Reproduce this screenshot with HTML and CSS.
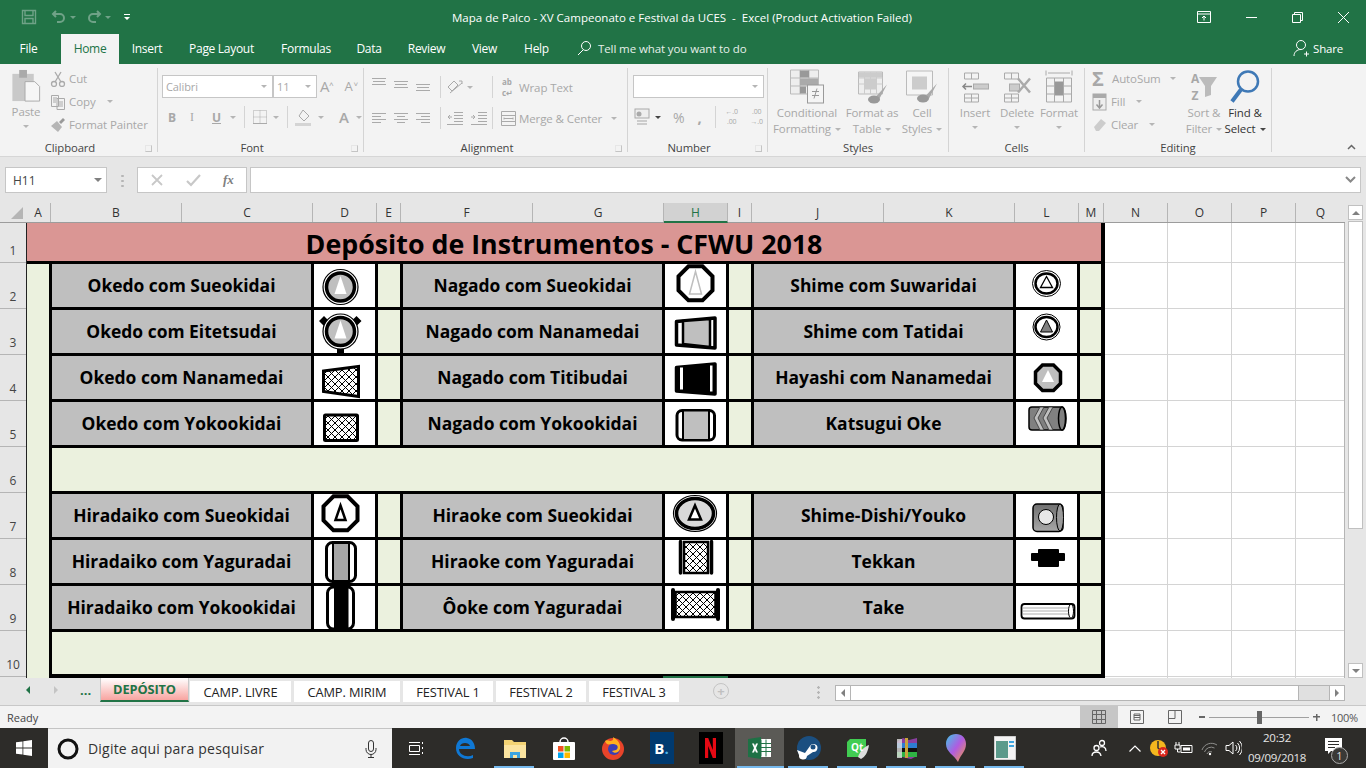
FILE: index.html
```html
<!DOCTYPE html>
<html lang="pt">
<head>
<meta charset="utf-8">
<title>Mapa de Palco</title>
<link rel="stylesheet" href="styles.css">
</head>
<body>
<svg class="defs" width="0" height="0"><defs>
<pattern id="hatch" width="7" height="7" patternUnits="userSpaceOnUse"><rect width="7" height="7" fill="#fff"/><path d="M0 0L7 7M7 0L0 7" stroke="#000" stroke-width="1" fill="none"/></pattern>
<linearGradient id="metal" x1="0" y1="0" x2="0" y2="1"><stop offset="0" stop-color="#6f6f6f"/><stop offset="1" stop-color="#a8a8a8"/></linearGradient>
</defs></svg>
<div class="app">
<header class="titlebar">
  <div class="qat">
    <svg class="qs" width="16" height="16" viewBox="0 0 16 16" fill="none" stroke="#6fa287" stroke-width="1.4"><path d="M1.5 1.5h13v13h-13zM4 1.5v5h8v-5M4 14.5v-5h8v5"/></svg>
    <svg width="16" height="16" viewBox="0 0 16 16" fill="none" stroke="#6fa287" stroke-width="2"><path d="M5 2L2 5l3 3M2 5h7a4 4 0 0 1 0 8H6"/></svg><i class="caret qc"></i>
    <svg width="16" height="16" viewBox="0 0 16 16" fill="none" stroke="#6fa287" stroke-width="2"><path d="M11 2l3 3-3 3M14 5H7a4 4 0 0 0 0 8h3"/></svg><i class="caret qc"></i>
    <svg class="qmore" width="8" height="8" viewBox="0 0 8 8" fill="#fff"><path d="M1 1h6v1H1zM1 4h6L4 7z"/></svg>
  </div>
  <div class="doc-title">Mapa de Palco - XV Campeonato e Festival da UCES &nbsp;- &nbsp;Excel (Product Activation Failed)</div>
  <div class="winbtns">
    <svg width="14" height="12" viewBox="0 0 14 12" fill="none" stroke="#fff"><path d="M.5.5h13v11H.5zM.5 3h13M7 9.5V5M5 7l2-2 2 2"/></svg>
    <svg width="11" height="11" viewBox="0 0 11 11" stroke="#fff"><path d="M0 5.5h11"/></svg>
    <svg width="11" height="11" viewBox="0 0 11 11" fill="none" stroke="#fff"><path d="M.5 2.5h8v8h-8zM2.5 2.5v-2h8v8h-2"/></svg>
    <svg width="11" height="11" viewBox="0 0 11 11" fill="none" stroke="#fff"><path d="M0 0l11 11M11 0L0 11"/></svg>
  </div>
</header>
<nav class="tabbar">
  <span class="tab t-file">File</span><span class="tab active t-home">Home</span><span class="tab t-ins">Insert</span><span class="tab t-pl">Page Layout</span><span class="tab t-for">Formulas</span><span class="tab t-dat">Data</span><span class="tab t-rev">Review</span><span class="tab t-vie">View</span><span class="tab t-hel">Help</span>
  <span class="tell"><svg width="16" height="16" viewBox="0 0 16 16" fill="none" stroke="#fff"><circle cx="10" cy="6" r="4.5"/><path d="M7 10l-5 5"/></svg>Tell me what you want to do</span>
  <span class="share"><svg width="16" height="18" viewBox="0 0 16 18" fill="none" stroke="#fff"><circle cx="8" cy="6" r="4.5"/><path d="M1 17c0-4 3-6.500 7-6.500M11 15h5M13.500 12.500v5"/></svg>Share</span>
</nav>
<section class="ribbon">
  <div class="group g-clip">
    <div class="gbody">
      <div class="big paste">
        <svg width="30" height="36" viewBox="0 0 30 36"><rect x="1" y="5" width="22" height="28" fill="#c9c9c9"/><rect x="8" y="1" width="8" height="8" fill="#aaa"/><path d="M14 13h10l5 5v15H14z" fill="#f6f6f6" stroke="#aaa"/></svg>
        <span>Paste</span><i class="caret"></i>
      </div>
      <div class="smalls">
        <div class="sm"><svg class="si" width="16" height="16" viewBox="0 0 16 16" fill="none" stroke="#aaa" stroke-width="1.3"><circle cx="4" cy="13" r="2.500"/><circle cx="12" cy="13" r="2.500"/><path d="M5 11L11 1M11 11L5 1"/></svg>Cut</div>
        <div class="sm"><svg class="si" width="16" height="16" viewBox="0 0 16 16" fill="none" stroke="#aaa"><path d="M1.500 1.500h7v11h-7zM7 4.500h7.500v11H7zM3 4h4M3 6h3M3 8h3M9 8h4M9 10h4M9 12h4"/></svg>Copy<i class="caret cm"></i></div>
        <div class="sm"><svg class="si" width="16" height="16" viewBox="0 0 16 16"><path d="M1 9l6-5 5 6-4 5z" fill="#b5b5b5"/><path d="M9 5l4-4 2 2-4 4z" fill="#999"/></svg>Format Painter</div>
      </div>
    </div>
    <div class="glabel pad">Clipboard<i class="launch"></i></div>
  </div>
  <div class="group g-font">
    <div class="gbody col">
      <div class="frow r-top">
        <div class="select s-font">Calibri<i class="caret end"></i></div>
        <div class="select s-size">11<i class="caret end"></i></div>
        <span class="glyph gA big-a">A<sup>˄</sup></span><span class="glyph gA small-a">A<sup>˅</sup></span>
      </div>
      <div class="frow r-bot">
        <b class="glyph fb">B</b><i class="glyph fi">I</i><u class="glyph fu">U</u><i class="caret"></i><span class="vsep"></span>
        <svg width="16" height="16" viewBox="0 0 16 16" fill="none" stroke="#aaa" stroke-dasharray="1 1"><path d="M1.500 1.500h13v13h-13zM8 1.500v13M1.500 8h13"/><path d="M1 14.500h14" stroke-dasharray="none"/></svg><i class="caret"></i><span class="vsep"></span>
        <svg width="18" height="18" viewBox="0 0 18 18"><path d="M8 2l6 6-5 5-5-5z" fill="none" stroke="#aaa"/><rect y="15" width="16" height="3" fill="#d4d4d4"/></svg><i class="caret"></i>
        <span class="glyph fa">A</span><i class="caret fc"></i>
      </div>
    </div>
    <div class="glabel pad">Font<i class="launch"></i></div>
  </div>
  <div class="group g-align">
    <div class="gbody col">
      <div class="frow a-top">
        <svg class="lines" width="14" height="14" viewBox="0 0 14 14" stroke="#aaa"><path d="M0 1.500h14M1 4.500h12M0 7.500h14"/></svg>
        <svg class="lines" width="14" height="14" viewBox="0 0 14 14" stroke="#aaa"><path d="M0 4.500h14M1 7.500h12M0 10.500h14"/></svg>
        <svg class="lines" width="14" height="14" viewBox="0 0 14 14" stroke="#aaa"><path d="M0 7.500h14M1 10.500h12M0 13.500h14"/></svg>
        <span class="vsep vs1"></span>
        <svg width="16" height="16" viewBox="0 0 16 16" fill="none" stroke="#aaa"><path d="M1 8l6-6 4 4-6 6zM3 14L15 4M12 2h3v3"/></svg><i class="caret"></i>
        <span class="vsep vs2"></span>
        <span class="ab"><span>ab</span><span>c↵</span></span><span class="alab">Wrap Text</span>
      </div>
      <div class="frow a-bot">
        <svg class="lines" width="14" height="14" viewBox="0 0 14 14" stroke="#aaa"><path d="M0 2.500h14M0 5.500h9M0 8.500h14M0 11.500h9"/></svg>
        <svg class="lines" width="14" height="14" viewBox="0 0 14 14" stroke="#aaa"><path d="M0 2.500h14M3 5.500h8M0 8.500h14M3 11.500h8"/></svg>
        <svg class="lines" width="14" height="14" viewBox="0 0 14 14" stroke="#aaa"><path d="M0 2.500h14M5 5.500h9M0 8.500h14M5 11.500h9"/></svg>
        <span class="vsep vs1"></span>
        <svg class="lines" width="16" height="14" viewBox="0 0 16 14" stroke="#aaa" fill="none"><path d="M7 1.500h9M7 4.500h9M7 7.500h9M7 10.500h9M0 13.500h16M5 6H1M3 4L1 6l2 2"/></svg>
        <svg class="lines" width="16" height="14" viewBox="0 0 16 14" stroke="#aaa" fill="none"><path d="M7 1.500h9M7 4.500h9M7 7.500h9M7 10.500h9M0 13.500h16M0 6h4M2 4l2 2-2 2"/></svg>
        <span class="vsep vs3"></span>
        <svg width="15" height="15" viewBox="0 0 15 15" fill="none" stroke="#aaa"><path d="M.5.500h14v14H.5zM.5 4.500h14M.5 10.500h14M3 7.500h9M3 6.500v2M12 6.500v2"/></svg>
        <span class="alab mlab">Merge &amp; Center</span><i class="caret mc"></i>
      </div>
    </div>
    <div class="glabel pad">Alignment<i class="launch"></i></div>
  </div>
  <div class="group g-num">
    <div class="gbody col">
      <div class="select s-num"><i class="caret end"></i></div>
      <div class="frow n-bot">
        <svg width="16" height="18" viewBox="0 0 16 18"><rect x="1" y="1" width="14" height="9" fill="#eee" stroke="#aaa"/><circle cx="5" cy="6" r="2.500" fill="#aaa"/><path d="M3 12h10v2H3zM3 15h10v2H3z" fill="#ccc"/></svg><i class="caret dark"></i>
        <span class="glyph pc">%</span><span class="glyph cm2">,</span><span class="vsep"></span>
        <span class="dec"><span>←.0</span><span>.00</span></span><span class="dec"><span>.00</span><span>→.0</span></span>
      </div>
    </div>
    <div class="glabel pad">Number<i class="launch"></i></div>
  </div>
  <div class="group g-styles">
    <div class="gbody">
      <div class="big w-cf">
        <svg width="34" height="34" viewBox="0 0 34 34"><path d="M.5.500h28v24H.5z" fill="#eee" stroke="#bbb"/><path d="M.5 8.500h28M.5 16.500h28M10 .5v24M19 .5v24" stroke="#bbb"/><rect x="10" y="1" width="9" height="7" fill="#999"/><rect x="10" y="9" width="18" height="7" fill="#aaa"/><rect x="10" y="17" width="6" height="7" fill="#999"/><rect x="17.500" y="15.500" width="16" height="18" fill="#f5f5f5" stroke="#999"/><path d="M22 22h7M22 26h7M27 19l-3 10" stroke="#999" fill="none"/></svg>
        <span>Conditional<br>Formatting<i class="caret ci"></i></span>
      </div>
      <div class="big w-ft">
        <svg width="34" height="34" viewBox="0 0 34 34"><path d="M3.500 2.500h24v22h-24z" fill="#eee" stroke="#bbb"/><path d="M3.500 8.500h24M3.500 14.500h24M9.500 2.500v22M15.500 2.500v22M21.500 2.500v22" stroke="#ccc"/><rect x="4" y="3" width="23" height="5" fill="#ccc"/><rect x="9" y="9" width="13" height="11" fill="#ccc"/><path d="M32 15L21 27l3 3z" fill="#aaa"/><ellipse cx="19" cy="30" rx="6" ry="4" fill="#999"/></svg>
        <span>Format as<br>Table<i class="caret ci"></i></span>
      </div>
      <div class="big w-cs">
        <svg width="34" height="34" viewBox="0 0 34 34"><path d="M1.500 1.500h26v24h-26z" fill="#f5f5f5" stroke="#bbb"/><rect x="7" y="7" width="15" height="13" fill="#ccc"/><path d="M32 14L21 26l3 3z" fill="#aaa"/><ellipse cx="18" cy="29" rx="6" ry="4" fill="#999"/></svg>
        <span>Cell<br>Styles<i class="caret ci"></i></span>
      </div>
    </div>
    <div class="glabel">Styles</div>
  </div>
  <div class="group g-cells">
    <div class="gbody">
      <div class="big w-cell">
        <svg width="28" height="34" viewBox="0 0 28 34" fill="none" stroke="#aaa"><path d="M3.500 3.500h14v6h-14zM10.500 3.500v6M3.500 24.500h14v8h-14zM10.500 24.500v8M3.500 28.500h14"/><rect x="12.500" y="14.500" width="15" height="5" fill="#ccc"/><path d="M11 17H2M5 14l-3 3 3 3" stroke-width="1.500" stroke="#888"/></svg>
        <span>Insert</span><i class="caret"></i>
      </div>
      <div class="big w-cell">
        <svg width="30" height="34" viewBox="0 0 30 34" fill="none" stroke="#aaa"><path d="M2.500 3.500h14v6h-14zM9.500 3.500v6M2.500 24.500h14v8h-14zM9.500 24.500v8M2.500 28.500h14"/><rect x="7.500" y="14.500" width="10" height="7" fill="#ccc"/><path d="M16 9l12 14M28 9L16 23" stroke-width="2.500" stroke="#aaa"/></svg>
        <span>Delete</span><i class="caret"></i>
      </div>
      <div class="big w-cell">
        <svg width="30" height="36" viewBox="0 0 30 36" fill="none" stroke="#aaa"><path d="M2 2v5M28 2v5M4 4.500h22M2.500 9.500h25v24h-25zM10.500 9.500v24M19.500 9.500v24M2.500 17.500h25M2.500 25.500h25"/><rect x="11" y="13" width="8" height="14" fill="#999" stroke="none"/></svg>
        <span>Format</span><i class="caret"></i>
      </div>
    </div>
    <div class="glabel">Cells</div>
  </div>
  <div class="group g-edit">
    <div class="gbody">
      <div class="smalls es">
        <div class="sm"><span class="sigma">Σ</span>AutoSum<i class="caret am"></i></div>
        <div class="sm"><svg class="si" width="16" height="18" viewBox="0 0 16 18"><rect x="1" y="1" width="13" height="16" fill="#eee" stroke="#aaa"/><rect x="1" y="1" width="13" height="4" fill="#aaa"/><path d="M7.500 7v8M4.500 11.500l3 3.500 3-3.500" stroke="#999" stroke-width="1.500" fill="none"/></svg>Fill<i class="caret cm"></i></div>
        <div class="sm"><svg class="si" width="16" height="16" viewBox="0 0 16 16"><path d="M2 10l7-8 5 4-7 8H4z" fill="#ccc"/></svg>Clear<i class="caret cm"></i></div>
      </div>
      <div class="big w-sort">
        <span class="sorticon"><span class="az"><span>A</span><span>Z</span></span><svg width="18" height="22" viewBox="0 0 18 22"><path d="M0 1h18l-6 9v9l-6 2V10z" fill="#bbb"/></svg></span>
        <span>Sort &amp;<br>Filter<i class="caret ci"></i></span>
      </div>
      <div class="big w-find">
        <svg width="34" height="36" viewBox="0 0 34 36" fill="none"><circle cx="20" cy="13" r="10" stroke="#3f79b6" stroke-width="2.500"/><path d="M13 21L4 33" stroke="#3f79b6" stroke-width="4"/></svg>
        <span>Find &amp;<br>Select<i class="caret ci dark"></i></span>
      </div>
    </div>
    <div class="glabel">Editing</div>
  </div>
  <div class="collapse"><svg width="9" height="6" viewBox="0 0 9 6" fill="none" stroke="#666" stroke-width="1.500"><path d="M1 5l3.500-3.500L8 5"/></svg></div>
</section>
<section class="fbar">
  <div class="namebox">H11<i class="caret end nb"></i></div>
  <div class="fdots"></div>
  <div class="fxbox">
    <svg width="14" height="14" viewBox="0 0 14 14" stroke="#c8c8c8" stroke-width="1.800"><path d="M2 2l10 10M12 2L2 12"/></svg>
    <svg width="15" height="14" viewBox="0 0 15 14" stroke="#c8c8c8" stroke-width="2.200" fill="none"><path d="M1 8l4 4 9-10"/></svg>
    <em class="fx">fx</em>
  </div>
  <div class="finput"><svg width="11" height="8" viewBox="0 0 11 8" fill="none" stroke="#888" stroke-width="2"><path d="M1 1l4.500 4.500L10 1"/></svg></div>
</section>
<main class="sheetarea">
  <div class="gridwrap">
    <div class="colheads">
      <div class="corner"><i class="tri"></i></div>
      <div class="ch w-a">A</div><div class="ch w-b">B</div><div class="ch w-c">C</div><div class="ch w-d">D</div><div class="ch w-e">E</div><div class="ch w-f">F</div><div class="ch w-g">G</div><div class="ch w-h sel">H</div><div class="ch w-i">I</div><div class="ch w-j">J</div><div class="ch w-k">K</div><div class="ch w-l">L</div><div class="ch w-m">M</div><div class="ch w-n">N</div><div class="ch w-n">O</div><div class="ch w-n">P</div><div class="ch w-q">Q</div>
    </div>
    <div class="gridbody">
      <div class="rowheads">
        <div class="rh r1">1</div><div class="rh">2</div><div class="rh">3</div><div class="rh">4</div><div class="rh">5</div><div class="rh">6</div><div class="rh">7</div><div class="rh">8</div><div class="rh">9</div><div class="rh">10</div>
      </div>
      <div class="table">
        <div class="title">Depósito de Instrumentos - CFWU 2018</div>
        <div class="colA"></div>

        <div class="lab">Okedo com Sueokidai</div>
        <div class="ic"><svg class="ico" viewBox="0 0 61 43"><circle cx="26.500" cy="23" r="17.500" fill="#fff" stroke="#000" stroke-width="1.200"/><circle cx="26.500" cy="23" r="14" fill="#bfbfbf" stroke="#000" stroke-width="3.500"/><path d="M26.500 12l6 18h-12z" fill="#fff"/></svg></div><div class="gap"></div>
        <div class="lab">Nagado com Sueokidai</div>
        <div class="ic"><svg class="ico" viewBox="0 0 61 43"><path d="M23.500 2.300h14l10 10v14l-10 10h-14l-10-10v-14z" fill="#fff" stroke="#000" stroke-width="4"/><path d="M30.500 7.500l6 22.500h-12z" fill="#fff" stroke="#bfbfbf" stroke-width="1.500"/></svg></div><div class="gap"></div>
        <div class="lab">Shime com Suwaridai</div>
        <div class="ic"><svg class="ico" viewBox="0 0 61 43"><ellipse cx="30.500" cy="19.500" rx="14" ry="13" fill="#fff" stroke="#000"/><ellipse cx="30.500" cy="19.500" rx="11" ry="10" fill="#fff" stroke="#000" stroke-width="2.500"/><path d="M30.500 12.500l6 11h-12z" fill="#fff" stroke="#000" stroke-width="1.300"/></svg></div><div class="gap"></div>

        <div class="lab">Okedo com Eitetsudai</div>
        <div class="ic"><svg class="ico" viewBox="0 0 61 43"><path d="M10 6l5 5-5 5-5-5zM42.500 6l5 5-5 5-5-5z" fill="#000"/><rect x="23" y="36" width="7" height="9" fill="#000"/><circle cx="26.500" cy="21.500" r="17.500" fill="#fff" stroke="#000" stroke-width="1.200"/><circle cx="26.500" cy="21.500" r="14" fill="#bfbfbf" stroke="#000" stroke-width="3.500"/><path d="M26.500 10.500l6 18h-12z" fill="#fff"/></svg></div><div class="gap"></div>
        <div class="lab">Nagado com Nanamedai</div>
        <div class="ic"><svg class="ico" viewBox="0 0 61 43"><path d="M11.500 11.500L50 8v30L11.500 35z" fill="#fff" stroke="#000" stroke-width="3.500" stroke-linejoin="round"/><path d="M18 11L45 9v28L18 34z" fill="#bfbfbf" stroke="#000" stroke-width="2.500"/></svg></div><div class="gap"></div>
        <div class="lab">Shime com Tatidai</div>
        <div class="ic"><svg class="ico" viewBox="0 0 61 43"><ellipse cx="30.500" cy="17" rx="13.500" ry="13" fill="#fff" stroke="#000"/><ellipse cx="30.500" cy="17" rx="11" ry="10" fill="#fff" stroke="#000" stroke-width="2.500"/><path d="M30.500 10l6 12h-12z" fill="#808080" stroke="#000"/></svg></div><div class="gap"></div>

        <div class="lab">Okedo com Nanamedai</div>
        <div class="ic"><svg class="ico" viewBox="0 0 61 43"><path d="M9.500 15L44.500 10.500v30L9.500 35.500z" fill="url(#hatch)" stroke="#000" stroke-width="3"/></svg></div><div class="gap"></div>
        <div class="lab">Nagado com Titibudai</div>
        <div class="ic"><svg class="ico" viewBox="0 0 61 43"><path d="M11.500 11.500L50 8v30L11.500 35z" fill="#000" stroke="#000" stroke-width="3.500" stroke-linejoin="round"/><path d="M15 11.500h3v22h-3zM45 9.500h2.500v26H45z" fill="#fff"/></svg></div><div class="gap"></div>
        <div class="lab">Hayashi com Nanamedai</div>
        <div class="ic"><svg class="ico" viewBox="0 0 61 43"><path d="M26.500 9h11l7 7v11.500l-7 7h-11l-7-7V16z" fill="#bfbfbf" stroke="#000" stroke-width="3.500"/><path d="M32 14l6 12H26z" fill="#fff"/></svg></div><div class="gap"></div>

        <div class="lab">Okedo com Yokookidai</div>
        <div class="ic"><svg class="ico" viewBox="0 0 61 43"><rect x="10.500" y="13" width="33" height="25.500" rx="1" fill="url(#hatch)" stroke="#000" stroke-width="3"/></svg></div><div class="gap"></div>
        <div class="lab">Nagado com Yokookidai</div>
        <div class="ic"><svg class="ico" viewBox="0 0 61 43"><rect x="12" y="8.500" width="37.500" height="29.500" rx="5" fill="#fff" stroke="#000" stroke-width="3"/><rect x="18" y="8.500" width="26" height="29.500" fill="#bfbfbf" stroke="#000" stroke-width="2"/></svg></div><div class="gap"></div>
        <div class="lab">Katsugui Oke</div>
        <div class="ic"><svg class="ico" viewBox="0 0 61 43"><path d="M16 5h30a4 11.500 0 0 1 0 23H16a3 3 0 0 1-3-3V8a3 3 0 0 1 3-3z" fill="#808080" stroke="#000" stroke-width="1.500"/><ellipse cx="46" cy="16.500" rx="3.500" ry="11.500" fill="#808080" stroke="#000" stroke-width="1.500"/><path d="M24 5l-6 11 6 12h4l-6-12 6-11zM33 5l-6 11 6 12h4l-6-12 6-11z" fill="#bfbfbf" stroke="#333" stroke-width=".8"/></svg></div><div class="gap"></div>

        <div class="wide"></div>

        <div class="lab">Hiradaiko com Sueokidai</div>
        <div class="ic"><svg class="ico" viewBox="0 0 61 43"><path d="M19.500 2.300h14l10 10v14l-10 10h-14l-10-10v-14z" fill="#fff" stroke="#000" stroke-width="4"/><path d="M26.500 11.500l5 14.500h-10z" fill="#fff" stroke="#000" stroke-width="2.500"/></svg></div><div class="gap"></div>
        <div class="lab">Hiraoke com Sueokidai</div>
        <div class="ic"><svg class="ico" viewBox="0 0 61 43"><ellipse cx="30" cy="19.500" rx="21.500" ry="18" fill="#fff" stroke="#000" stroke-width="1.200"/><ellipse cx="30" cy="19.500" rx="18.500" ry="15" fill="#d9d9d9" stroke="#000" stroke-width="3.500"/><path d="M30 11.500l6 14h-12z" fill="#fff" stroke="#000" stroke-width="2.500"/></svg></div><div class="gap"></div>
        <div class="lab">Shime-Dishi/Youko</div>
        <div class="ic"><svg class="ico" viewBox="0 0 61 43"><rect x="17" y="10" width="30" height="27.500" rx="4" fill="url(#metal)" stroke="#000" stroke-width="1.500"/><ellipse cx="44" cy="23.500" rx="3.500" ry="13.500" fill="#999" stroke="#000"/><circle cx="30" cy="23" r="7.500" fill="#e8e8e8" stroke="#000"/></svg></div><div class="gap"></div>

        <div class="lab">Hiradaiko com Yaguradai</div>
        <div class="ic"><svg class="ico" viewBox="0 0 61 43"><rect x="12.500" y="2.500" width="29" height="39" rx="6" fill="#fff" stroke="#000" stroke-width="3"/><rect x="19" y="3" width="16" height="38" fill="#a6a6a6" stroke="#000" stroke-width="2"/></svg></div><div class="gap"></div>
        <div class="lab">Hiraoke com Yaguradai</div>
        <div class="ic"><svg class="ico" viewBox="0 0 61 43"><rect x="19" y="2" width="24" height="31" fill="url(#hatch)" stroke="#000" stroke-width="2.500"/><path d="M15.500 1.500v31.500M46.500 1.500v31.500" stroke="#000" stroke-width="3.500" stroke-linecap="round"/></svg></div><div class="gap"></div>
        <div class="lab">Tekkan</div>
        <div class="ic"><svg class="ico" viewBox="0 0 61 43"><path d="M22 10a1 1 0 0 1 1-1h19a1 1 0 0 1 1 1v3h5a1 1 0 0 1 1 1v6a1 1 0 0 1-1 1h-5v5a1 1 0 0 1-1 1H23a1 1 0 0 1-1-1v-5h-6a1 1 0 0 1-1-1v-6a1 1 0 0 1 1-1h6z" fill="#000"/></svg></div><div class="gap"></div>

        <div class="lab">Hiradaiko com Yokookidai</div>
        <div class="ic"><svg class="ico" viewBox="0 0 61 43"><rect x="13.500" y="1" width="26" height="42" rx="6" fill="#fff" stroke="#000" stroke-width="3"/><rect x="20" y="1" width="14.500" height="42" fill="#000"/></svg></div><div class="gap"></div>
        <div class="lab">Ôoke com Yaguradai</div>
        <div class="ic"><svg class="ico" viewBox="0 0 61 43"><rect x="10.500" y="6" width="40" height="25" fill="url(#hatch)" stroke="#000" stroke-width="2.500"/><path d="M8 4v29M53 4v29" stroke="#000" stroke-width="4" stroke-linecap="round"/></svg></div><div class="gap"></div>
        <div class="lab">Take</div>
        <div class="ic"><svg class="ico" viewBox="0 0 61 43"><rect x="5.500" y="18" width="53" height="14.500" rx="3" fill="#fff" stroke="#000" stroke-width="1.800"/><path d="M7 22h47M7 25h47M7 28h47" stroke="#999" stroke-width=".8"/><ellipse cx="55" cy="25.200" rx="2.500" ry="7" fill="#fff" stroke="#000"/></svg></div><div class="gap"></div>

        <div class="wide last"></div>
        <div class="selbar"></div>
      </div>
      <div class="blank"></div>
    </div>
  </div>
  <div class="vscroll">
    <div class="vbtn"><i class="up"></i></div>
    <div class="vthumb"></div>
    <div class="vtrack"></div>
    <div class="vbtn"><i class="down"></i></div>
  </div>
</main>
<section class="sheettabs">
  <div class="tabnav"><i class="nl"></i><i class="nr"></i><b>...</b></div>
  <span class="stab cur">DEPÓSITO</span>
  <span class="stab s1">CAMP. LIVRE</span><span class="stab s2">CAMP. MIRIM</span><span class="stab s3">FESTIVAL 1</span><span class="stab s3">FESTIVAL 2</span><span class="stab s3">FESTIVAL 3</span>
  <span class="addsheet">+</span>
  <span class="hdots"></span>
  <div class="hscroll"><div class="hbtn"><i class="nlg"></i></div><div class="hthumb"></div><div class="htrack"></div><div class="hbtn"><i class="nrg"></i></div></div>
</section>
<footer class="status">
  <span class="ready">Ready</span>
  <div class="views">
    <span class="vw on"><svg width="14" height="14" viewBox="0 0 14 14" fill="none" stroke="#666"><path d="M.5.5h13v13H.5zM4.500.5v13M9.500.5v13M.5 4.500h13M.5 9.500h13"/></svg></span>
    <span class="vw"><svg width="14" height="14" viewBox="0 0 14 14" fill="none" stroke="#666"><path d="M.5.5h13v13H.5zM4 4h6v6H4zM4 5.500h6M4 7.500h6"/></svg></span>
    <span class="vw"><svg width="14" height="14" viewBox="0 0 14 14" fill="none" stroke="#666"><path d="M.5.5h13v13H.5zM.5 8.500h6.500V.5"/></svg></span>
  </div>
  <div class="zoomctl"><i class="zm"></i><div class="slider"><i class="knob"></i></div><i class="zp"></i><span class="zpct">100%</span></div>
</footer>
<footer class="taskbar">
  <div class="start"><svg width="16" height="16" viewBox="0 0 16 16" fill="#fff"><path d="M0 2.300L6.500 1.400v6.200H0zM7.300 1.300L16 0v7.600H7.300zM0 8.400h6.500v6.200L0 13.700zM7.300 8.400H16V16l-8.700-1.300z"/></svg></div>
  <div class="search">
    <svg width="22" height="22" viewBox="0 0 22 22" fill="none" stroke="#111" stroke-width="3"><circle cx="11" cy="11" r="9"/></svg>
    <span class="stext">Digite aqui para pesquisar</span>
    <svg class="mic" width="12" height="18" viewBox="0 0 12 18" fill="none" stroke="#333"><rect x="3.500" y=".5" width="5" height="11" rx="2.500"/><path d="M1 8v1.500a5 5 0 0 0 10 0V8M6 14.500v3M3 17.500h6"/></svg>
  </div>
  <span class="tb"><svg width="16" height="16" viewBox="0 0 16 16" fill="none" stroke="#fff"><path d="M.5 5.500h10v6H.5zM0 2.500h11M0 14.500h11M13.500 2v2M13.500 7v2M13.500 12v2"/></svg></span>
  <span class="tb"><svg width="22" height="22" viewBox="0 0 22 22" fill="none"><path d="M20 12H4c0 6 8 9 14 6v3c-8 3-17-1-17-10C1 4 7 0 12 1c5 1 8 5 8 11z" fill="#0f78d4"/><path d="M5 9h10c-1-4-9-4-10 0z" fill="#2d2d2b"/></svg></span>
  <span class="tb on"><svg width="22" height="20" viewBox="0 0 22 20"><path d="M0 2h8l2 2h12v16H0z" fill="#f3d374"/><rect y="7" width="22" height="13" fill="#fbe4a0"/><path d="M6 20v-6h10v6h-3v-3H9v3z" fill="#3da5e0"/></svg></span>
  <span class="tb"><svg width="22" height="24" viewBox="0 0 22 24"><path d="M7 6a4 4 0 0 1 8 0" fill="none" stroke="#fff" stroke-width="1.500"/><rect y="6" width="22" height="18" rx="1" fill="#fff"/><rect x="5" y="10" width="5.500" height="5.500" fill="#f25022"/><rect x="11.500" y="10" width="5.500" height="5.500" fill="#7fba00"/><rect x="5" y="16.500" width="5.500" height="5.500" fill="#00a4ef"/><rect x="11.500" y="16.500" width="5.500" height="5.500" fill="#ffb900"/></svg></span>
  <span class="tb"><svg width="24" height="24" viewBox="0 0 24 24"><circle cx="12" cy="13" r="11" fill="#e8442a"/><circle cx="13" cy="13" r="6" fill="#3b3fb5"/><path d="M4 5c2 5 4 3 8 3 5 0 6 4 3 6l-4 1c2 3 7 2 8-2 1-5-2-9-7-12 1 3-1 4-3 4-2-1-4-1-5 0z" fill="#ffb01f"/></svg></span>
  <span class="tb"><span class="booking">B<em>.</em></span></span>
  <span class="tb"><span class="netflix"><svg width="11" height="20" viewBox="0 0 11 20" fill="#e50914"><path d="M0 0h3.200l4.600 12V0H11v20H7.800L3.200 8v12H0z"/></svg></span></span>
  <span class="tb on act"><svg width="24" height="22" viewBox="0 0 24 22"><rect x="9" y="2" width="14" height="18" fill="#fff"/><path d="M13 2.500v17M18 2.500v17M9 6.500h14M9 10.500h14M9 14.500h14" stroke="#217346"/><path d="M0 2l13-2v22L0 20z" fill="#1e7145"/><path d="M4 6.500h2l1 2.500 1-2.500h2L8 11l2 4.500H8l-1-2.500-1 2.500H4L6 11z" fill="#fff"/></svg></span>
  <span class="tb on"><svg width="24" height="24" viewBox="0 0 24 24"><circle cx="12" cy="12" r="12" fill="#1b4f80"/><path d="M0 14l8 3 5-7a4 4 0 1 1 3 6l-6 4a4 4 0 0 1-8-1z" fill="#fff"/><circle cx="16" cy="11" r="2.500" fill="#1b4f80"/></svg></span>
  <span class="tb on"><svg width="24" height="24" viewBox="0 0 24 24"><path d="M4 3h16v15l-3 3H1V6z" fill="#41cd52"/><path d="M12 21c2-6 6-10 11-12-1 7-4 12-8 14z" fill="#ddd"/><text class="qt" x="5" y="15">Qt</text></svg></span>
  <span class="tb on"><svg width="24" height="24" viewBox="0 0 24 24"><path d="M2 6l6-4 6 2 8-2v18l-6 3-14-3z" fill="#8a3fa0"/><rect x="2" y="7" width="20" height="5" fill="#2d7dd2"/><rect x="2" y="12" width="20" height="4" fill="#111"/><rect x="2" y="16" width="20" height="5" fill="#2fb344"/><path d="M2 3h5v19H2z" fill="#ddd" opacity=".8"/><rect x="10" y="2" width="3" height="20" fill="#c9a33b"/></svg></span>
  <span class="tb on"><svg width="20" height="28" viewBox="0 0 20 28"><defs><linearGradient id="drop" x1="0" y1="0" x2="1" y2="1"><stop offset="0" stop-color="#3fc6e8"/><stop offset=".5" stop-color="#b05be0"/><stop offset="1" stop-color="#f3a03a"/></linearGradient></defs><path d="M10 0c6 0 10 4 10 10 0 7-5 10-8 18-4-7-12-10-12-18C0 4 4 0 10 0z" fill="url(#drop)"/></svg></span>
  <span class="tb on"><svg width="22" height="24" viewBox="0 0 22 24"><rect width="22" height="24" fill="#f3f3f3" stroke="#aaa"/><rect x="2" y="5" width="12" height="17" fill="#5b9a8b"/><rect x="15" y="5" width="5" height="2" fill="#3da5e0"/><rect x="15" y="9" width="5" height="2" fill="#3da5e0"/></svg></span>
  <div class="tray">
    <span class="ty t-people"><svg width="16" height="18" viewBox="0 0 16 18" fill="none" stroke="#fff" stroke-width="1.300"><circle cx="5.500" cy="9" r="2.500"/><path d="M1 17c0-3 2-4 4.500-4s4 1 4.500 4"/><circle cx="11" cy="4" r="2.500"/><path d="M9 8c3-1 6 0 6 4"/></svg></span>
    <span class="ty t-chev"><svg width="12" height="7" viewBox="0 0 12 7" fill="none" stroke="#fff" stroke-width="1.200"><path d="M.5 6.500L6 1l5.500 5.500"/></svg></span>
    <span class="ty t-av"><svg width="18" height="18" viewBox="0 0 18 18"><circle cx="8" cy="9" r="8" fill="#f4b71e"/><path d="M8 2v7l5 4" stroke="#333" stroke-width="1.500" fill="none"/><circle cx="13" cy="13" r="5" fill="#d9281e"/><path d="M11 11l4 4M15 11l-4 4" stroke="#fff" stroke-width="1.300"/></svg></span>
    <span class="ty t-pow"><svg width="20" height="16" viewBox="0 0 20 16" fill="none" stroke="#fff"><path d="M1 5h5v4H1zM2 2v3M5 2v3M3.500 9v3h3M7 5.500h11v7H7z"/><rect x="9" y="7.500" width="7" height="3" fill="#fff" stroke="none"/></svg></span>
    <span class="ty t-wifi"><svg width="17" height="15" viewBox="0 0 17 15" fill="none" stroke="#8e8e8c"><path d="M1 9a10 10 0 0 1 15-5M3.500 11a7 7 0 0 1 10-4M6 13a3.500 3.500 0 0 1 5-2"/><circle cx="9" cy="13" r="1.200" fill="#fff" stroke="none"/></svg></span>
    <span class="ty t-vol"><svg width="17" height="16" viewBox="0 0 17 16" fill="none" stroke="#fff"><path d="M1 5.500h3L8 2v12l-4-3.500H1zM10.500 5a4 4 0 0 1 0 6M12.500 3a7 7 0 0 1 0 10M14.500 1a10 10 0 0 1 0 14"/></svg></span>
    <span class="clock"><span>20:32</span><span>09/09/2018</span></span>
    <span class="ty t-note"><svg width="17" height="16" viewBox="0 0 17 16"><path d="M0 0h17v13H6l-3 3v-3H0z" fill="#fff"/><path d="M3 3.500h11M3 6.500h11M3 9.500h7" stroke="#2d2d2b"/></svg><span class="badge">1</span></span>
  </div>
</footer>
</div>
</body>
</html>
```
FILE: styles.css
```css
*{box-sizing:border-box}
html,body{margin:0;padding:0;overflow:hidden}
body{width:1366px;height:768px;font-family:"Open Sans","Noto Sans",sans-serif;font-size:12px;color:#a8a8a8;background:#e6e6e6}
.defs{position:absolute}
.app{display:flex;flex-direction:column;width:1366px;height:768px;overflow:hidden}
i{font-style:normal}
.caret{display:inline-block;width:0;height:0;border-left:3px solid transparent;border-right:3px solid transparent;border-top:3px solid #b5b5b5}
.caret.dark{border-top-color:#444}

/* title bar */
.titlebar{height:34px;background:#217346;display:flex;align-items:center;color:#fff;flex:none}
.qat{display:flex;align-items:center;width:452px;padding-left:21px}
.qs{margin-right:14px}
.qat .qc{border-top-color:#6fa287;margin:0 10px 0 3px}
.qat .qmore{margin-left:2px}
.doc-title{width:640px;font-size:11.5px;letter-spacing:.01px;white-space:nowrap}
.winbtns{margin-left:auto;display:flex;align-items:center;gap:35px;padding-right:17px;justify-content:flex-end}

/* tabs */
.tabbar{height:30px;background:#217346;display:flex;align-items:stretch;color:#fff;font-size:12px;flex:none}
.tab{display:flex;align-items:center;justify-content:center;letter-spacing:-.3px;padding-bottom:2px}
.tab.active{background:#f3f3f3;color:#217346}
.t-file{width:61px;padding-right:4px}.t-home{width:58px}.t-ins{width:56px}.t-pl{width:93px}.t-for{width:76px}.t-dat{width:50px}.t-rev{width:65px}.t-vie{width:51px}.t-hel{width:53px}
.tell{display:flex;align-items:center;gap:6px;padding:0 0 2px 13px;white-space:nowrap;letter-spacing:-.1px;color:#e6f0ea;font-size:11.5px}
.share{margin-left:auto;display:flex;align-items:center;gap:4px;padding:0 23px 2px 0;font-size:11.5px;letter-spacing:-.2px}

/* ribbon */
.ribbon{height:93px;background:#f3f3f3;border-bottom:1px solid #d6d6d6;display:flex;padding-top:4px;flex:none;font-size:11.5px;letter-spacing:-.1px}
.group{display:flex;flex-direction:column;height:84px;border-right:1px solid #d4d4d4;flex:none}
.gbody{height:72px;display:flex;flex:none}
.gbody.col{flex-direction:column}
.glabel{height:12px;line-height:16px;text-align:center;color:#444;font-size:11.3px;position:relative;flex:none}
.glabel.pad{padding-right:17px}
.launch{position:absolute;right:5px;bottom:0;width:7px;height:7px;border:1px solid #c4c4c4;border-top:1px solid #e6e6e6;border-left:1px solid #e6e6e6}
.g-clip{width:158px}.g-font{width:206px}.g-align{width:264px}.g-num{width:140px}.g-styles{width:181px}.g-cells{width:136px}.g-edit{width:187px}
.big{display:flex;flex-direction:column;align-items:center;text-align:center;line-height:16px;flex:none;white-space:nowrap}
.big>svg,.big>.sorticon{height:37px;flex:none}
.big .caret{margin-top:5px}
.big .ci{margin-left:4px;margin-top:0;vertical-align:middle}
.paste{width:50px;padding-left:2px}
.big.paste>svg{height:35px;margin-top:1px}
.smalls{display:flex;flex-direction:column;margin-top:-1px}
.sm{height:23px;display:flex;align-items:center;gap:3px;white-space:nowrap}
.si{flex:none}
.cm{margin-left:8px}
.select{height:23px;background:#fff;border:1px solid #c6c6c6;display:flex;align-items:center;padding-left:3px;font-size:11px;position:relative}
.select .end{position:absolute;right:5px;top:9px}
.s-font{width:111px}.s-size{width:44px}
.frow{display:flex;align-items:center}
.r-top{padding:7px 0 0 4px}
.r-bot{padding:8px 0 0 10px;gap:5px}
.r-bot .vsep{margin:0 2px 0 3px}
.glyph{font-family:"Open Sans",sans-serif;color:#a8a8a8}
.gA{font-size:15px;line-height:15px;position:relative}
.gA sup{font-size:8px;position:absolute;left:9px;top:-3px}
.big-a{margin-left:3px}
.small-a{font-size:13px;margin-left:15px}
.fb{width:17px;font-weight:700;font-size:12px}.fi{width:17px;font-size:12px;font-family:"Liberation Serif",serif}.fu{width:13px;font-size:12px;font-weight:700}
.fa{font-size:15px;margin-left:10px;font-weight:600}
.fc{margin-left:2px}
.vsep{width:1px;height:22px;background:#d4d4d4;display:inline-block;flex:none}
.a-top{padding:0 0 0 8px;height:38px;gap:8px}
.a-top .lines{margin-bottom:6px}
.a-bot{padding:0 0 0 8px;gap:8px;height:24px}
.a-top .caret{margin-left:-4px}
.vs1{margin:0 -2px 0 2px}
.vs2{margin:0 1px 0 11px}
.vs3{margin:0 0 0 -3px}
.ab{display:flex;flex-direction:column;font-size:8px;line-height:11px;font-weight:700;margin-right:-3px;width:12px;white-space:nowrap}
.alab{white-space:nowrap}
.mlab{margin-left:-5px}
.mc{margin-left:1px}
.s-num{width:131px;margin:7px 0 0 5px;flex:none}
.n-bot{padding:8px 0 0 6px;gap:5px}
.pc{font-size:14px;margin-left:7px}.cm2{font-size:15px;font-weight:700;margin-left:8px;margin-right:8px}
.dec{display:flex;flex-direction:column;font-size:7px;line-height:10px;margin-left:4px;margin-right:2px;text-align:center;width:14px;white-space:nowrap;letter-spacing:-.2px}
.w-cf{width:78px}.w-ft{width:52px}.w-cs{width:48px}
.w-cell{width:42px}
.g-cells .gbody{padding-left:5px}
.es{width:95px;padding-left:7px}
.sigma{font-size:20px;line-height:20px;font-weight:700;color:#a8a8a8;width:17px}
.am{margin-left:6px}
.w-sort{width:44px;margin-left:2px}
.sorticon{display:flex;align-items:center;justify-content:center}
.az{display:flex;flex-direction:column;font-size:12px;line-height:17px;font-weight:700}
.w-find{width:38px;color:#333}
.w-find svg{display:block}
.collapse{flex:1;display:flex;align-items:flex-end;justify-content:flex-end;padding:0 10px 2px 0;height:84px}

/* formula bar */
.fbar{height:46px;background:#e6e6e6;display:flex;padding:10px 5px 0 5px;flex:none}
.namebox{width:102px;height:26px;background:#fff;border:1px solid #c6c6c6;display:flex;align-items:center;padding-left:7px;color:#444;font-size:12px;position:relative}
.nb{position:absolute;right:4px;top:10px;border-left-width:4px;border-right-width:4px;border-top:4px solid #808080}
.fdots{width:30px;height:26px;background:radial-gradient(circle,#b5b5b5 1px,transparent 1.500px) center 7px/3px 4px no-repeat,radial-gradient(circle,#b5b5b5 1px,transparent 1.500px) center 12px/3px 4px no-repeat,radial-gradient(circle,#b5b5b5 1px,transparent 1.500px) center 17px/3px 4px no-repeat}
.fxbox{width:110px;height:26px;background:#fff;border:1px solid #c6c6c6;display:flex;align-items:center;gap:22px;padding-left:12px}
.fx{font-family:"Liberation Serif",serif;font-weight:700;color:#808080;font-size:13px}
.finput{flex:1;margin-left:3px;height:26px;background:#fff;border:1px solid #c6c6c6;display:flex;align-items:center;justify-content:flex-end;padding-right:4px}

/* sheet */
.sheetarea{height:475px;display:flex;flex:none;background:#e6e6e6}
.gridwrap{width:1345px;display:flex;flex-direction:column}
.colheads{height:20px;display:flex;color:#333;font-size:12px;border-bottom:1px solid #9c9c9c}
.corner{width:26px;position:relative}
.tri{position:absolute;right:3px;bottom:3px;width:0;height:0;border-left:12px solid transparent;border-bottom:12px solid #b5b5b5}
.ch{display:flex;align-items:center;justify-content:center;border-right:1px solid #b5b5b5;flex:none}
.ch.sel{background:#d2d2d2;color:#217346;border-bottom:2px solid #217346;height:20px}
.w-a{width:25px}.w-b{width:131px}.w-c{width:131px}.w-d{width:64px}.w-e{width:24px}.w-f{width:132px}.w-g{width:131px}.w-h{width:64px}.w-i{width:24px}.w-j{width:132px}.w-k{width:131px}.w-l{width:64px}.w-m{width:25px}.w-n{width:64px}.w-q{width:49px;border-right:0}
.gridbody{display:flex;height:455px}
.rowheads{width:26px;display:flex;flex-direction:column;color:#444;font-size:12px;flex:none}
.rh{height:46px;flex:none;border-bottom:1px solid #b5b5b5;display:flex;align-items:flex-end;justify-content:center;padding-bottom:3px}
.rh.r1{height:40px}
.table{width:1079px;height:455px;flex:none;display:grid;grid-template-columns:22px 262px 64px 25px 262px 64px 25px 262px 64px 24px;grid-template-rows:38px repeat(8,46px) 49px;border-left:1px solid #222;border-right:4px solid #000;background:#ebf1de;position:relative}
.title{grid-column:1/-1;background:#da9694;color:#000;font-weight:700;font-size:26.8px;display:flex;align-items:center;justify-content:center;line-height:1;padding-top:4px}
.colA{grid-row:2/11;grid-column:1;background:#ebf1de;border-top:3px solid #000}
.lab,.ic,.gap,.wide{border-left:3px solid #000;border-top:3px solid #000}
.lab{background:#bfbfbf;color:#000;font-weight:700;font-size:17.45px;display:flex;align-items:center;justify-content:center;white-space:nowrap;padding-bottom:2px}
.ic{background:#fff;position:relative;z-index:1}
.gap{background:#ebf1de}
.wide{grid-column:2/-1;background:#ebf1de}
.wide.last{border-bottom:4px solid #000}
.ico{display:block;width:61px;height:43px;overflow:visible}
.selbar{position:absolute;left:636px;top:453px;width:65px;height:2px;background:#217346;z-index:2}
.blank{flex:1;background-color:#fff;background-image:linear-gradient(to right,transparent 63px,#d4d4d4 63px),linear-gradient(to bottom,transparent 45px,#d4d4d4 45px);background-size:64px 100%,100% 46px;background-position:-1px 0,0 -6px;border-right:1px solid #b5b5b5}
.vscroll{width:21px;padding:2px 3px 0 3px;display:flex;flex-direction:column}
.vbtn{height:15px;background:#fff;border:1px solid #c0c0c0;display:flex;align-items:center;justify-content:center;flex:none}
.up{width:0;height:0;border-left:4px solid transparent;border-right:4px solid transparent;border-bottom:4px solid #808080}
.down{width:0;height:0;border-left:4px solid transparent;border-right:4px solid transparent;border-top:4px solid #808080}
.vthumb{height:308px;margin-top:1px;background:#fff;border:1px solid #c0c0c0}
.vtrack{flex:1}

/* sheet tabs */
.sheettabs{height:28px;background:#e6e6e6;border-bottom:1px solid #c8c8c8;display:flex;align-items:flex-start;flex:none;color:#222;font-size:12.8px}
.tabnav{width:100px;height:24px;display:flex;align-items:center;padding-left:26px}
.nl{width:0;height:0;border-top:4px solid transparent;border-bottom:4px solid transparent;border-right:4px solid #217346}
.nr{width:0;height:0;border-top:4px solid transparent;border-bottom:4px solid transparent;border-left:4px solid #c4c4c4;margin-left:24px}
.tabnav b{color:#217346;margin-left:22px;font-weight:700;font-size:13px}
.stab{height:24px;display:flex;align-items:center;justify-content:center;background:#fff;flex:none;margin-right:3px;background-clip:content-box;white-space:nowrap;letter-spacing:-.1px;border-top:3px solid transparent}
.stab.cur{width:89px;margin-right:1px;border-top:0;background:linear-gradient(#fff,#f8a4a0);color:#217346;font-weight:700;border-bottom:2px solid #217346;border-left:1px solid #c8c8c8;border-right:1px solid #c8c8c8}
.s1{width:101px}.s2{width:106px}.s3{width:90px}
.addsheet{width:16px;height:16px;border:1px solid #c4c4c4;border-radius:50%;color:#c0c0c0;display:flex;align-items:center;justify-content:center;margin:5px 0 0 31px;font-weight:700;font-size:13px;line-height:1}
.hdots{width:3px;height:14px;margin:7px 0 0 88px;background:radial-gradient(circle,#b5b5b5 1px,transparent 1.500px) 0 0/3px 5px}
.hscroll{margin:7px 0 0 15px;width:510px;height:16px;display:flex;background:#e0e0e0;border:1px solid #b5b5b5}
.hbtn{width:14px;background:#fff;display:flex;align-items:center;justify-content:center;flex:none}
.nlg{width:0;height:0;border-top:4px solid transparent;border-bottom:4px solid transparent;border-right:4px solid #808080}
.nrg{width:0;height:0;border-top:4px solid transparent;border-bottom:4px solid transparent;border-left:4px solid #808080}
.hthumb{width:449px;background:#fff;border-left:1px solid #b5b5b5;border-right:1px solid #b5b5b5}
.htrack{flex:1;border-right:1px solid #b5b5b5}

/* status */
.status{height:22px;background:#f3f3f3;display:flex;align-items:center;color:#444;font-size:11px;flex:none}
.ready{padding-left:7px;width:1080px}
.views{display:flex;height:22px;width:114px}
.vw{width:38px;display:flex;align-items:center;justify-content:center}
.vw.on{background:#c6c6c6}
.zoomctl{display:flex;align-items:center;margin-left:5px;flex:1}
.zm{width:6px;height:2px;background:#666}
.slider{width:100px;height:1px;background:#a0a0a0;margin:0 4px;position:relative}
.knob{position:absolute;left:48px;top:-6px;width:5px;height:13px;background:#666}
.zp{width:7px;height:7px;background:linear-gradient(#666,#666) center/7px 1.500px no-repeat,linear-gradient(#666,#666) center/1.500px 7px no-repeat}
.zpct{margin-left:11px;color:#555;letter-spacing:-.3px}

/* taskbar */
.taskbar{height:40px;background:#2d2c29;display:flex;flex:none;color:#fff}
.start{width:48px;display:flex;align-items:center;justify-content:center}
.search{width:344px;background:#f2f2f2;display:flex;align-items:center;padding-left:9px;border-top:1px solid #c4c4c4;color:#333;font-size:14px}
.stext{margin-left:9px;white-space:nowrap;letter-spacing:.2px}
.mic{margin-left:auto;margin-right:15px}
.tb{width:49px;display:flex;align-items:center;justify-content:center;position:relative;flex:none}
.tb.on::after{content:"";position:absolute;left:4px;right:5px;bottom:0;height:2px;background:#76b9ed}
.tb.act{background:#5b5a56}
.tb.act::after{left:2px;right:0}
.booking{width:24px;height:32px;background:#003a70;color:#fff;font-weight:700;font-size:15px;display:flex;align-items:center;justify-content:center}
.booking em{color:#4fb3e8;font-style:normal}
.netflix{width:24px;height:32px;background:#000;display:flex;align-items:center;justify-content:center}
.qt{font-size:10px;font-weight:700;fill:#fff;font-family:"Open Sans",sans-serif}
.tray{flex:1;display:flex;align-items:center}
.ty{display:flex;align-items:center;justify-content:center;flex:none}
.t-people{width:24px;margin-left:58px}
.t-chev{width:24px;margin-left:12px}
.t-av{width:24px}.t-pow{width:26px}.t-wifi{width:24px}.t-vol{width:24px}
.clock{width:64px;display:flex;flex-direction:column;align-items:center;font-size:11.5px;line-height:20px;letter-spacing:-.3px;color:#e6e6e6}
.t-note{width:22px;margin-left:13px;position:relative;margin-top:-4px}
.badge{position:absolute;left:9px;top:9px;width:17px;height:17px;border-radius:50%;border:1px solid #aaa;background:#3a3936;color:#ddd;font-size:11px;display:flex;align-items:center;justify-content:center}
```
